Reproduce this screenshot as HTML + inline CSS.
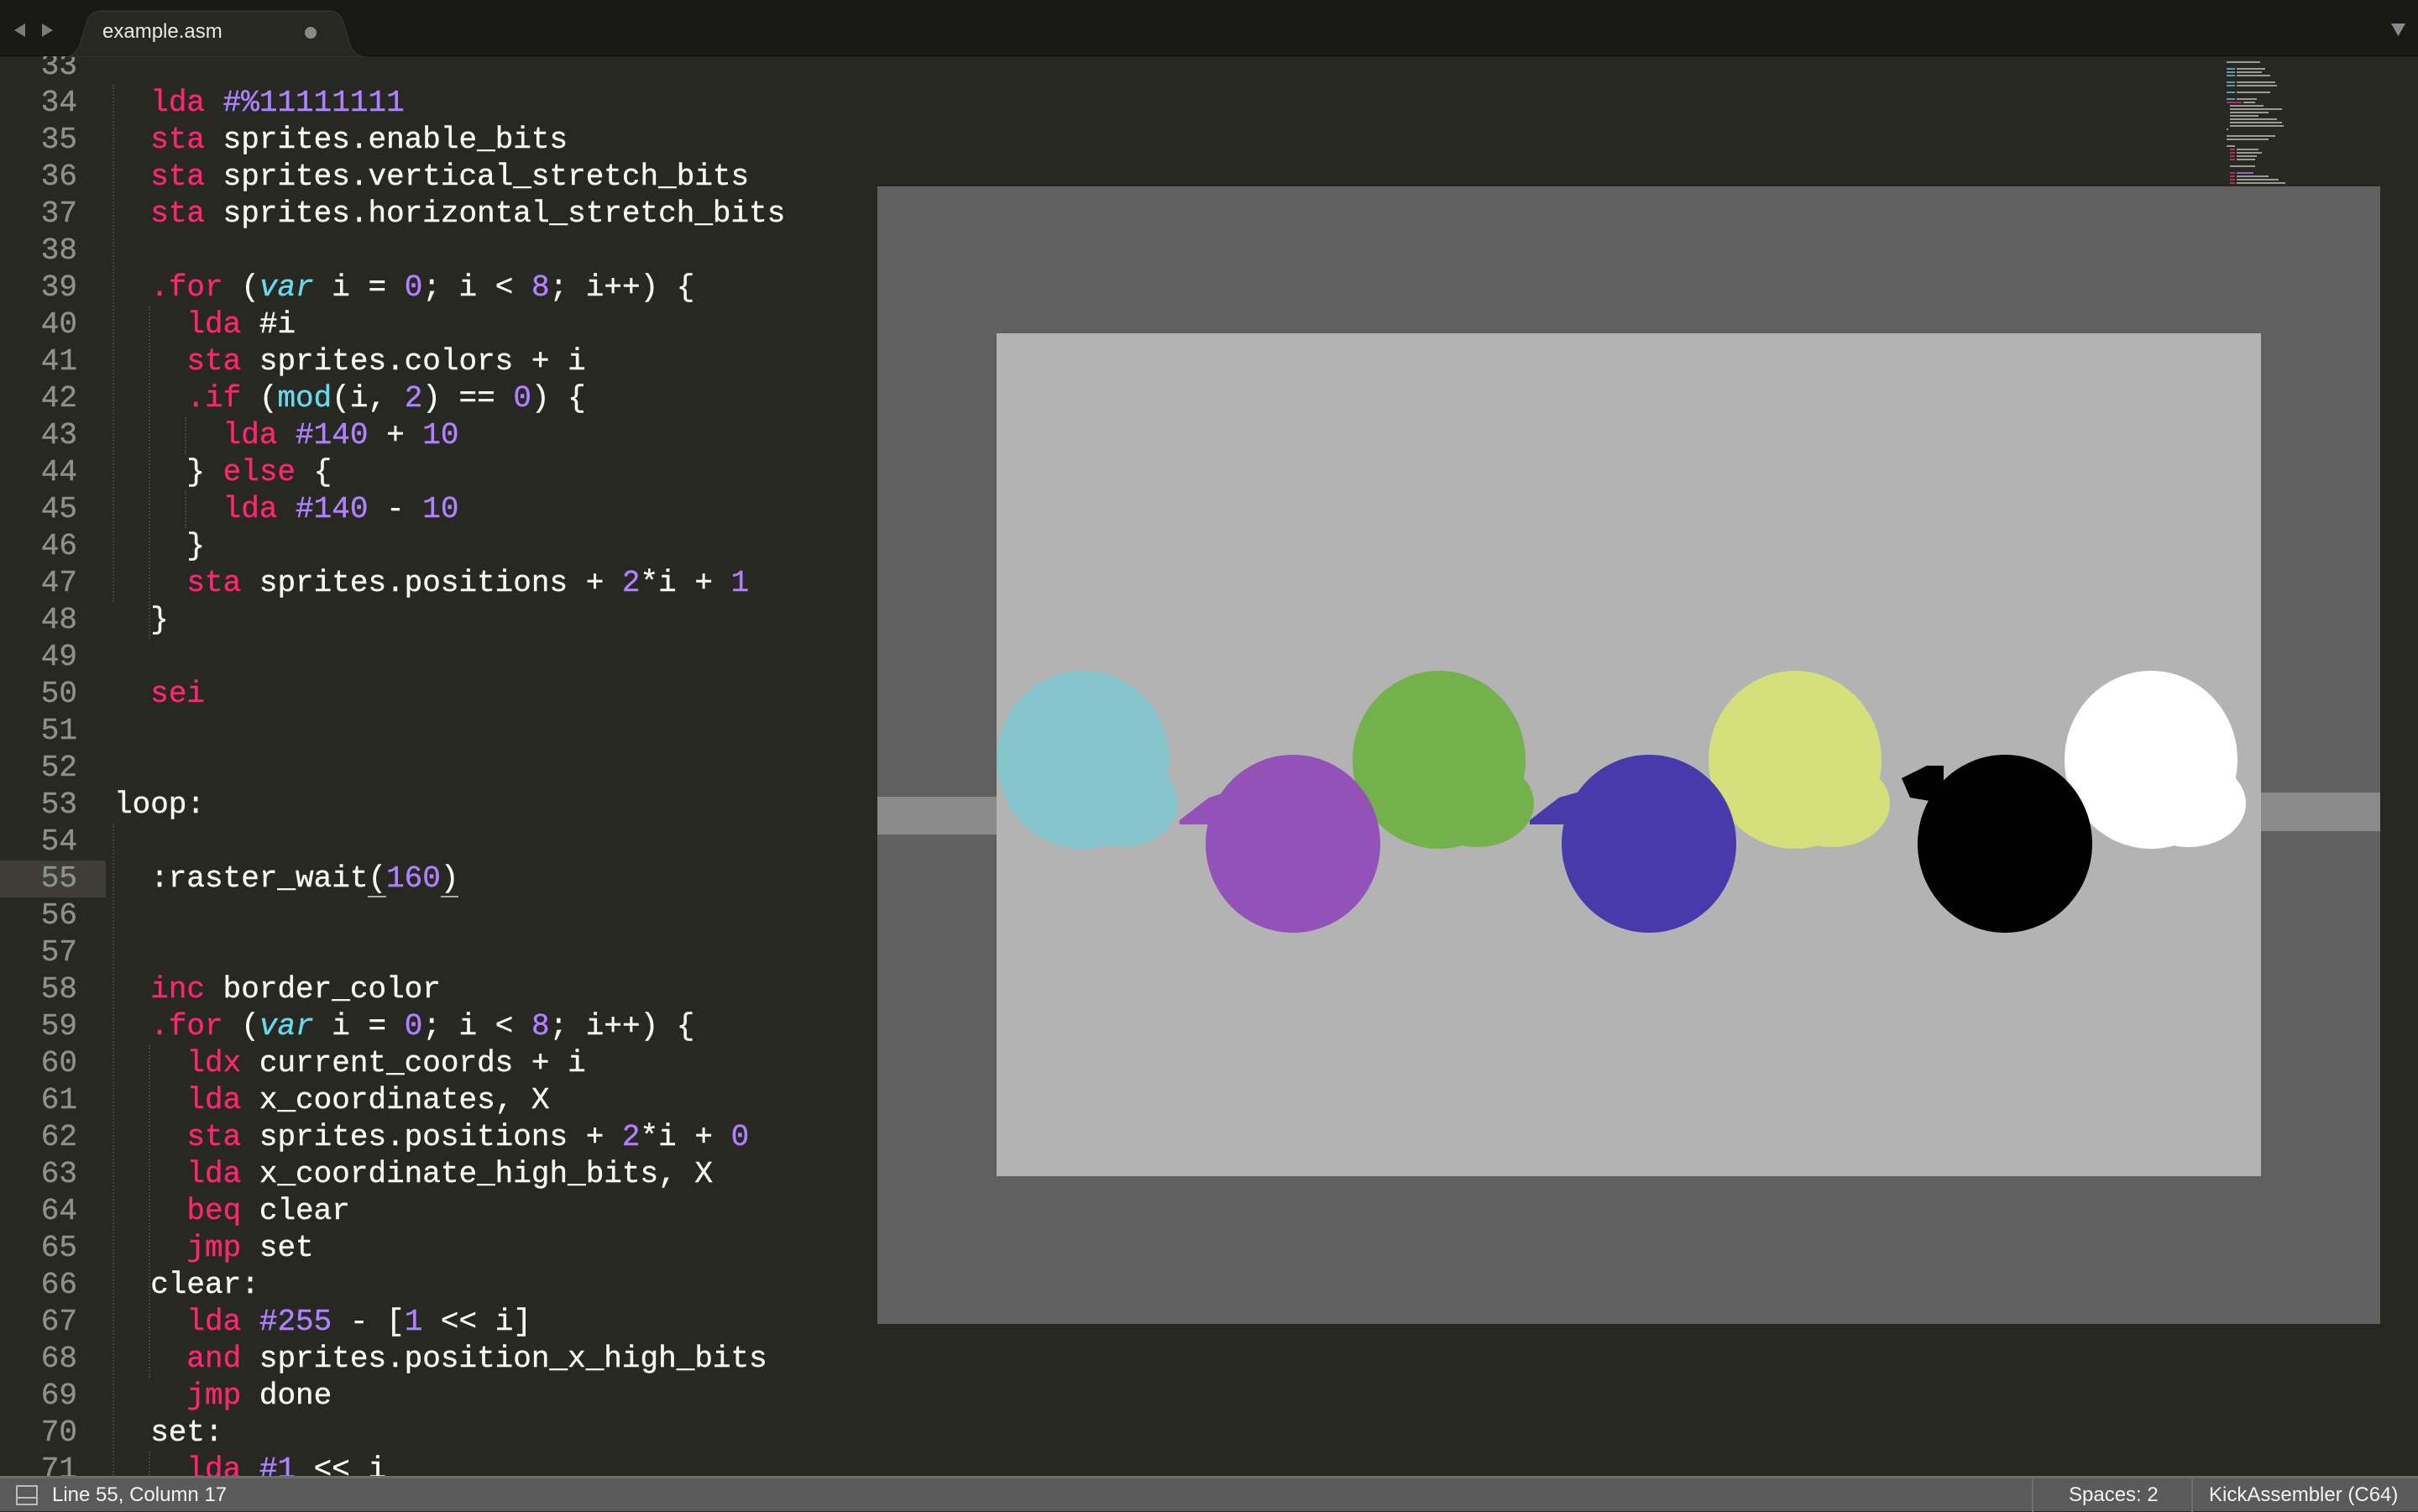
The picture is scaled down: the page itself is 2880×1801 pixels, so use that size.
<!DOCTYPE html>
<html><head><meta charset="utf-8"><style>
*{margin:0;padding:0;box-sizing:border-box}
body{width:2880px;height:1800px;background:#282823;overflow:hidden;position:relative;font-family:"Liberation Mono",monospace}
#tabbar{position:absolute;left:0;top:0;width:2880px;height:67px;background:#181816;border-bottom:1px solid #111;z-index:5}
.code{position:absolute;left:0;top:57px;font-size:36px;color:#f8f8f2;z-index:1;-webkit-text-stroke:0.4px currentColor}
.ln{position:absolute;left:0;width:92px;text-align:right;color:#8f908a;height:44px;line-height:44px}
.cl{position:absolute;left:136px;height:44px;line-height:44px;white-space:pre}
.k{color:#f92672}.n{color:#ae81ff}.c{color:#66d9ef}.i{color:#66d9ef;font-style:italic}
#status{position:absolute;left:0;top:1758px;width:2880px;height:42px;background:#5a5a5a;border-top:3px solid #6c6c6c;font-family:"Liberation Sans",sans-serif;font-size:24px;color:#f2f2f2;z-index:5}
.g{position:absolute;width:0;border-left:2px dotted #46463f}
</style></head><body>
<div id="tabbar">
<svg width="2880" height="68" style="position:absolute;left:0;top:0">
<polygon points="17,36 30,28 30,44" fill="#7a7a7a"/>
<polygon points="63,36 50,28 50,44" fill="#7a7a7a"/>
<path d="M78,68 Q92,66 96,50 L104,24 Q108,13 122,13 L390,13 Q404,13 408,24 L416,50 Q420,66 434,68 Z" fill="#282823" stroke="#3a3a35" stroke-width="1"/>
<circle cx="370" cy="39" r="7" fill="#8a8a8a"/>
<polygon points="2848,28 2865,28 2856.5,43" fill="#8a8a8a"/>
</svg>
<div style="position:absolute;left:122px;top:24px;font-family:'Liberation Sans',sans-serif;font-size:24px;color:#e8e8e8">example.asm</div>
</div>

<div class="code">
<div style="position:absolute;left:0;top:968px;width:126px;height:44px;background:#3f3e36"></div>
<div class="g" style="left:134px;top:44px;height:616px"></div>
<div class="g" style="left:134px;top:924px;height:800px"></div>
<div class="g" style="left:177px;top:308px;height:396px"></div>
<div class="g" style="left:177px;top:1188px;height:396px"></div>
<div class="g" style="left:220px;top:440px;height:44px"></div>
<div class="g" style="left:220px;top:528px;height:44px"></div>
<div class="g" style="left:177px;top:1672px;height:60px"></div>

<div class="ln" style="top:0">33</div>
<div class="ln" style="top:44px">34</div><div class="cl" style="top:44px">  <span class="k">lda</span> <span class="n">#%11111111</span></div>
<div class="ln" style="top:88px">35</div><div class="cl" style="top:88px">  <span class="k">sta</span> sprites.enable_bits</div>
<div class="ln" style="top:132px">36</div><div class="cl" style="top:132px">  <span class="k">sta</span> sprites.vertical_stretch_bits</div>
<div class="ln" style="top:176px">37</div><div class="cl" style="top:176px">  <span class="k">sta</span> sprites.horizontal_stretch_bits</div>
<div class="ln" style="top:220px">38</div>
<div class="ln" style="top:264px">39</div><div class="cl" style="top:264px">  <span class="k">.for</span> (<span class="i">var</span> i = <span class="n">0</span>; i &lt; <span class="n">8</span>; i++) {</div>
<div class="ln" style="top:308px">40</div><div class="cl" style="top:308px">    <span class="k">lda</span> #i</div>
<div class="ln" style="top:352px">41</div><div class="cl" style="top:352px">    <span class="k">sta</span> sprites.colors + i</div>
<div class="ln" style="top:396px">42</div><div class="cl" style="top:396px">    <span class="k">.if</span> (<span class="c">mod</span>(i, <span class="n">2</span>) == <span class="n">0</span>) {</div>
<div class="ln" style="top:440px">43</div><div class="cl" style="top:440px">      <span class="k">lda</span> <span class="n">#140</span> + <span class="n">10</span></div>
<div class="ln" style="top:484px">44</div><div class="cl" style="top:484px">    } <span class="k">else</span> {</div>
<div class="ln" style="top:528px">45</div><div class="cl" style="top:528px">      <span class="k">lda</span> <span class="n">#140</span> - <span class="n">10</span></div>
<div class="ln" style="top:572px">46</div><div class="cl" style="top:572px">    }</div>
<div class="ln" style="top:616px">47</div><div class="cl" style="top:616px">    <span class="k">sta</span> sprites.positions + <span class="n">2</span>*i + <span class="n">1</span></div>
<div class="ln" style="top:660px">48</div><div class="cl" style="top:660px">  }</div>
<div class="ln" style="top:704px">49</div>
<div class="ln" style="top:748px">50</div><div class="cl" style="top:748px">  <span class="k">sei</span></div>
<div class="ln" style="top:792px">51</div>
<div class="ln" style="top:836px">52</div>
<div class="ln" style="top:880px">53</div><div class="cl" style="top:880px">loop:</div>
<div class="ln" style="top:924px">54</div>
<div class="ln" style="top:968px">55</div><div class="cl" style="top:968px">  :raster_wait<span style="border-bottom:2px solid #aaa">(</span><span class="n">160</span><span style="border-bottom:2px solid #aaa">)</span></div>
<div class="ln" style="top:1012px">56</div>
<div class="ln" style="top:1056px">57</div>
<div class="ln" style="top:1100px">58</div><div class="cl" style="top:1100px">  <span class="k">inc</span> border_color</div>
<div class="ln" style="top:1144px">59</div><div class="cl" style="top:1144px">  <span class="k">.for</span> (<span class="i">var</span> i = <span class="n">0</span>; i &lt; <span class="n">8</span>; i++) {</div>
<div class="ln" style="top:1188px">60</div><div class="cl" style="top:1188px">    <span class="k">ldx</span> current_coords + i</div>
<div class="ln" style="top:1232px">61</div><div class="cl" style="top:1232px">    <span class="k">lda</span> x_coordinates, X</div>
<div class="ln" style="top:1276px">62</div><div class="cl" style="top:1276px">    <span class="k">sta</span> sprites.positions + <span class="n">2</span>*i + <span class="n">0</span></div>
<div class="ln" style="top:1320px">63</div><div class="cl" style="top:1320px">    <span class="k">lda</span> x_coordinate_high_bits, X</div>
<div class="ln" style="top:1364px">64</div><div class="cl" style="top:1364px">    <span class="k">beq</span> clear</div>
<div class="ln" style="top:1408px">65</div><div class="cl" style="top:1408px">    <span class="k">jmp</span> set</div>
<div class="ln" style="top:1452px">66</div><div class="cl" style="top:1452px">  clear:</div>
<div class="ln" style="top:1496px">67</div><div class="cl" style="top:1496px">    <span class="k">lda</span> <span class="n">#255</span> - [<span class="n">1</span> &lt;&lt; i]</div>
<div class="ln" style="top:1540px">68</div><div class="cl" style="top:1540px">    <span class="k">and</span> sprites.position_x_high_bits</div>
<div class="ln" style="top:1584px">69</div><div class="cl" style="top:1584px">    <span class="k">jmp</span> done</div>
<div class="ln" style="top:1628px">70</div><div class="cl" style="top:1628px">  set:</div>
<div class="ln" style="top:1672px">71</div><div class="cl" style="top:1672px">    <span class="k">lda</span> <span class="n">#1</span> &lt;&lt; i</div>
</div>

<!-- minimap -->
<svg width="120" height="160" style="position:absolute;left:2650px;top:68px;z-index:2">
<g fill="#9a9a92">
<rect x="2" y="5" width="40" height="2"/>
<rect x="2" y="13" width="10" height="2" fill="#5a9ab0"/><rect x="14" y="13" width="34" height="2"/>
<rect x="2" y="17" width="10" height="2" fill="#5a9ab0"/><rect x="14" y="17" width="30" height="2"/>
<rect x="2" y="21" width="10" height="2" fill="#5a9ab0"/><rect x="14" y="21" width="40" height="2"/>
<rect x="2" y="29" width="10" height="2" fill="#5a9ab0"/><rect x="14" y="29" width="46" height="2"/>
<rect x="2" y="33" width="10" height="2" fill="#5a9ab0"/><rect x="14" y="33" width="48" height="2"/>
<rect x="2" y="41" width="10" height="2" fill="#5a9ab0"/><rect x="14" y="41" width="40" height="2"/>
<rect x="2" y="49" width="10" height="2" fill="#5a9ab0"/><rect x="14" y="49" width="24" height="2"/>
<rect x="2" y="53" width="18" height="2" fill="#b03060"/><rect x="22" y="53" width="14" height="2"/>
<rect x="6" y="57" width="40" height="2"/><rect x="6" y="61" width="62" height="2"/>
<rect x="6" y="65" width="46" height="2"/><rect x="6" y="69" width="34" height="2"/>
<rect x="6" y="73" width="56" height="2"/><rect x="6" y="77" width="62" height="2"/>
<rect x="6" y="81" width="64" height="2"/><rect x="2" y="85" width="2" height="2"/>
<rect x="2" y="93" width="58" height="2"/><rect x="2" y="97" width="50" height="2"/>
<rect x="2" y="105" width="10" height="2"/>
<rect x="6" y="109" width="6" height="2" fill="#b03060"/><rect x="14" y="109" width="26" height="2"/>
<rect x="6" y="113" width="6" height="2" fill="#b03060"/><rect x="14" y="113" width="30" height="2"/>
<rect x="6" y="117" width="6" height="2" fill="#b03060"/><rect x="14" y="117" width="24" height="2"/>
<rect x="6" y="121" width="6" height="2" fill="#b03060"/><rect x="14" y="121" width="22" height="2"/>
<rect x="6" y="129" width="30" height="2"/>
<rect x="6" y="137" width="6" height="2" fill="#b03060"/><rect x="14" y="137" width="20" height="2" fill="#8a6ac0"/>
<rect x="6" y="141" width="6" height="2" fill="#b03060"/><rect x="14" y="141" width="38" height="2"/>
<rect x="6" y="145" width="6" height="2" fill="#b03060"/><rect x="14" y="145" width="50" height="2"/>
<rect x="6" y="149" width="6" height="2" fill="#b03060"/><rect x="14" y="149" width="58" height="2"/>
</g></svg>

<!-- emulator image -->
<svg width="1790" height="1355" style="position:absolute;left:1045px;top:222px;z-index:3" shape-rendering="crispEdges">
<rect width="1790" height="1355" fill="#606060"/>
<rect x="0" y="727" width="142" height="45" fill="#8a8a8a"/>
<rect x="1648" y="722" width="142" height="46" fill="#8a8a8a"/>
<defs><clipPath id="cb"><rect x="142" y="175" width="1506" height="1004"/></clipPath></defs>
<rect x="142" y="175" width="1506" height="1004" fill="#b3b3b3"/>
<g clip-path="url(#cb)" shape-rendering="auto">
<ellipse cx="245" cy="683" rx="103" ry="106" fill="#85c5cb"/>
<ellipse cx="290" cy="735" rx="68" ry="52" fill="#85c5cb"/>
<ellipse cx="669" cy="683" rx="103" ry="106" fill="#74b04b"/>
<ellipse cx="714" cy="735" rx="68" ry="52" fill="#74b04b"/>
<rect x="740" y="752" width="34" height="7" fill="#74b04b"/>
<ellipse cx="1093" cy="683" rx="103" ry="106" fill="#d5df7c"/>
<ellipse cx="1138" cy="735" rx="68" ry="52" fill="#d5df7c"/>
<ellipse cx="1517" cy="683" rx="103" ry="106" fill="#ffffff"/>
<ellipse cx="1562" cy="735" rx="68" ry="52" fill="#ffffff"/>
<ellipse cx="495" cy="783" rx="104" ry="106" fill="#9352b8"/>
<polygon points="360,755 395,728 420,720 420,760 360,760" fill="#9352b8"/>
<ellipse cx="919" cy="783" rx="104" ry="106" fill="#483aaa"/>
<polygon points="777,755 812,728 840,720 840,760 777,760" fill="#483aaa"/>
<ellipse cx="1343" cy="783" rx="104" ry="106" fill="#000000"/>
<polygon points="1220,705 1250,690 1270,690 1270,735 1230,728" fill="#000000"/>
</g>
</svg>

<div id="status">
<svg width="30" height="30" style="position:absolute;left:18px;top:4px"><rect x="2" y="5" width="24" height="22" fill="none" stroke="#bbb" stroke-width="2"/><line x1="2" y1="19" x2="26" y2="19" stroke="#bbb" stroke-width="2"/></svg>
<div style="position:absolute;left:62px;top:6px">Line 55, Column 17</div>
<div style="position:absolute;left:2420px;top:0;width:2px;height:40px;background:#6f6f6f"></div>
<div style="position:absolute;left:2464px;top:6px">Spaces: 2</div>
<div style="position:absolute;left:2610px;top:0;width:2px;height:40px;background:#6f6f6f"></div>
<div style="position:absolute;left:2631px;top:6px">KickAssembler (C64)</div>
</div>
</body></html>
